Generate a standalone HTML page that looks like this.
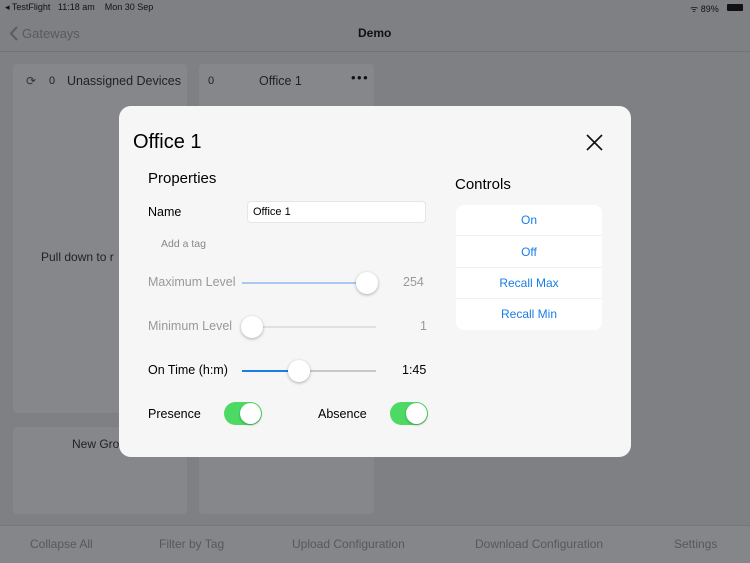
<!DOCTYPE html><html><head><style>
*{margin:0;padding:0;box-sizing:border-box}
body{width:750px;height:563px;background:#7f8084;font-family:"Liberation Sans",sans-serif;position:relative;overflow:hidden;color:#000}
.a{position:absolute;white-space:nowrap}
.card{position:absolute;background:#86878b;border-radius:4px}
.track{position:absolute;height:2px;background:#c7c7cc}
.knob{position:absolute;width:22px;height:22px;border-radius:50%;background:#fff;box-shadow:0 1px 3px rgba(0,0,0,.3)}
.tog{position:absolute;width:38px;height:23px;border-radius:12px;background:#4cd964}
.tog i{position:absolute;right:1px;top:1px;width:21px;height:21px;border-radius:50%;background:#fff;box-shadow:0 1px 2px rgba(0,0,0,.3)}
.ctl{position:absolute;left:456px;width:146px;height:31px;color:#1a7ee6;font-size:12px;text-align:center;line-height:31px;border-bottom:1px solid #f0f0f0}
</style></head><body>
<div class="a" style="left:5px;top:2px;font-size:9px;color:#111">◂ TestFlight&nbsp;&nbsp; 11:18 am&nbsp;&nbsp;&nbsp; Mon 30 Sep</div>
<div class="a" style="left:690px;top:2px;font-size:9px;color:#111">ᯤ 89%</div>
<div class="a" style="left:727px;top:4px;width:16px;height:7px;background:#111;border-radius:1px"></div>
<svg class="a" style="left:9px;top:26px" width="10" height="15"><path d="M8 1L2 7.5 8 14" stroke="#5a5a5e" stroke-width="2" fill="none"/></svg>
<div class="a" style="left:22px;top:26px;font-size:13px;color:#5a5a5e">Gateways</div>
<div class="a" style="left:358px;top:26px;font-size:12px;font-weight:bold;color:#111">Demo</div>
<div class="a" style="left:0;top:51px;width:750px;height:1px;background:#737377"></div>
<div class="card" style="left:13px;top:64px;width:174px;height:349px"></div>
<div class="card" style="left:199px;top:64px;width:175px;height:349px"></div>
<div class="card" style="left:13px;top:427px;width:174px;height:87px"></div>
<div class="card" style="left:199px;top:427px;width:175px;height:87px"></div>
<div class="a" style="left:26px;top:74px;font-size:12px;color:#333">⟳</div>
<div class="a" style="left:49px;top:75px;font-size:11px;color:#222">0</div>
<div class="a" style="left:67px;top:74px;font-size:12.5px;color:#222">Unassigned Devices</div>
<div class="a" style="left:208px;top:75px;font-size:11px;color:#222">0</div>
<div class="a" style="left:259px;top:74px;font-size:12.5px;color:#222">Office 1</div>
<div class="a" style="left:351px;top:70px;font-size:13px;color:#111;letter-spacing:1.5px">•••</div>
<div class="a" style="left:41px;top:250px;font-size:12px;color:#222">Pull down to r</div>
<div class="a" style="left:72px;top:437px;font-size:12px;color:#222">New Gro</div>
<div class="a" style="left:0;top:525px;width:750px;height:38px;background:#85868a;border-top:1px solid #76777b"></div>
<div class="a" style="left:30px;top:537px;font-size:12px;color:#57585c">Collapse All</div>
<div class="a" style="left:159px;top:537px;font-size:12px;color:#57585c">Filter by Tag</div>
<div class="a" style="left:292px;top:537px;font-size:12px;color:#57585c">Upload Configuration</div>
<div class="a" style="left:475px;top:537px;font-size:12px;color:#57585c">Download Configuration</div>
<div class="a" style="left:674px;top:537px;font-size:12px;color:#57585c">Settings</div>

<div class="a" style="left:119px;top:106px;width:512px;height:351px;background:#f6f6f6;border-radius:12px"></div>
<div class="a" style="left:133px;top:131px;font-size:20px">Office 1</div>
<svg class="a" style="left:586px;top:134px" width="17" height="17"><path d="M1 1L16 16M16 1L1 16" stroke="#111" stroke-width="1.6"/></svg>
<div class="a" style="left:148px;top:170px;font-size:15px">Properties</div>
<div class="a" style="left:148px;top:205px;font-size:12.5px">Name</div>
<div class="a" style="left:247px;top:201px;width:179px;height:22px;background:#fff;border:1px solid #e6e6e6;border-radius:4px;font-size:11px;padding:4px 5px">Office 1</div>
<div class="a" style="left:161px;top:238px;font-size:10.5px;color:#888">Add a tag</div>
<div class="a" style="left:148px;top:275px;font-size:12.5px;color:#999">Maximum Level</div>
<div class="track" style="left:242px;top:282px;width:134px;background:#a9c9f1"></div>
<div class="knob" style="left:356px;top:272px"></div>
<div class="a" style="left:403px;top:275px;font-size:12.5px;color:#999">254</div>
<div class="a" style="left:148px;top:319px;font-size:12.5px;color:#999">Minimum Level</div>
<div class="track" style="left:242px;top:326px;width:134px;background:#e0e0e0"></div>
<div class="knob" style="left:241px;top:316px"></div>
<div class="a" style="left:420px;top:319px;font-size:12.5px;color:#999">1</div>
<div class="a" style="left:148px;top:363px;font-size:12.5px">On Time (h:m)</div>
<div class="track" style="left:242px;top:370px;width:134px"></div>
<div class="track" style="left:242px;top:370px;width:58px;background:#1a7ee6"></div>
<div class="knob" style="left:288px;top:360px"></div>
<div class="a" style="left:402px;top:363px;font-size:12.5px">1:45</div>
<div class="a" style="left:148px;top:407px;font-size:12.5px">Presence</div>
<div class="tog" style="left:224px;top:402px"><i></i></div>
<div class="a" style="left:318px;top:407px;font-size:12.5px">Absence</div>
<div class="tog" style="left:390px;top:402px"><i></i></div>
<div class="a" style="left:455px;top:176px;font-size:15px">Controls</div>
<div class="a" style="left:456px;top:205px;width:146px;height:125px;background:#fff;border-radius:8px"></div>
<div class="ctl" style="top:205px">On</div>
<div class="ctl" style="top:237px">Off</div>
<div class="ctl" style="top:268px">Recall Max</div>
<div class="ctl" style="top:299px;border:0">Recall Min</div>
</body></html>
